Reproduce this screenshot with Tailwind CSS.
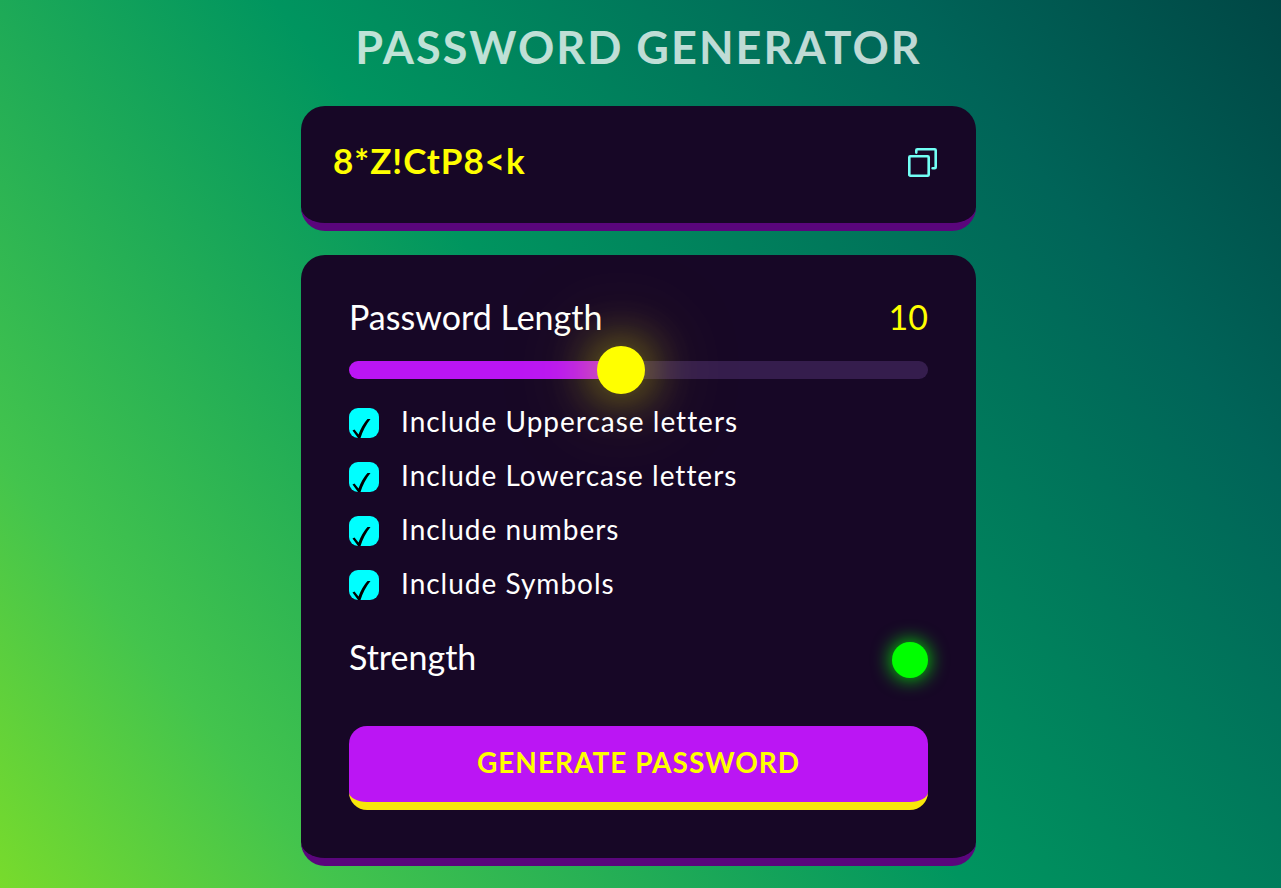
<!DOCTYPE html>
<html lang="en">
<head>
<meta charset="utf-8">
<meta name="viewport" content="width=device-width, initial-scale=1">
<title>Password Generator</title>
<script src="https://cdn.jsdelivr.net/npm/@tailwindcss/browser@4"></script>
</head>
<body class="min-h-screen bg-[linear-gradient(52deg,#78db2c_0%,#43c44d_17%,#00955f_49%,#006458_81%,#004745_100%)] font-['Lato',sans-serif] text-white">
<main class="mx-auto flex w-full max-w-[675px] flex-col gap-6 pt-5 pr-1 box-content">
  <h1 class="mb-2 text-center text-[45px] leading-[54px] font-bold tracking-[2px] whitespace-nowrap uppercase text-white/75">Password Generator</h1>

  <section class="flex items-center justify-between rounded-3xl border-b-8 border-[#5a067c] bg-[#170726] px-8 pt-7 pb-8">
    <output for="length" class="pb-1 text-[35px] leading-[53px] font-bold tracking-[1px] text-[#ffff00]">8*Z!CtP8&lt;k</output>
    <button type="button" aria-label="Copy password" class="p-1 text-[#72fff5]">
      <svg class="h-9 w-9" viewBox="0 0 36 36" fill="none" stroke="currentColor" stroke-width="2.6" stroke-linejoin="round" stroke-linecap="round">
        <rect x="5.3" y="11.3" width="19.4" height="19.4" rx="1"/>
        <path d="M12.3 7.6V5.3a1 1 0 0 1 1-1h17.4a1 1 0 0 1 1 1v17a1 1 0 0 1-1 1H28.6"/>
      </svg>
    </button>
  </section>

  <form class="rounded-3xl border-b-8 border-[#5a067c] bg-[#170726] px-12 pt-9 pb-12">
    <div class="flex items-center justify-between text-[34px] leading-[52px]">
      <label for="length">Password Length</label>
      <output for="length" class="text-[#ffff00]">10</output>
    </div>
    <input id="length" type="range" min="3" max="18" value="10" class="mt-[18px] block h-[18px] w-full appearance-none rounded-full bg-[linear-gradient(90deg,#bb15f4_47%,#351d4d_47%)] [&::-webkit-slider-thumb]:h-12 [&::-webkit-slider-thumb]:w-12 [&::-webkit-slider-thumb]:appearance-none [&::-webkit-slider-thumb]:rounded-full [&::-webkit-slider-thumb]:bg-[#ffff00] [&::-webkit-slider-thumb]:shadow-[0_0_100px_rgba(255,255,0,0.4),0_0_50px_rgba(255,255,0,0.65)]">
    <div class="mt-[29px] flex flex-col gap-6 text-[28px] leading-[26px] tracking-[1px]">
      <div class="flex items-start gap-[22px]">
        <input id="upper" type="checkbox" checked class="h-[30px] w-[30px] appearance-none rounded-[9px] bg-[#00ffff] bg-[url('data:image/svg+xml,%3Csvg%20xmlns=%22http://www.w3.org/2000/svg%22%20viewBox=%220%200%2030%2030%22%3E%3Cpath%20d=%22M3.5%2022.5L5.5%2021.5L9.5%2026.5Q13%2017%2018.5%2011H21.5Q15%2019%2011.5%2030H9Z%22/%3E%3C/svg%3E')]">
        <label for="upper">Include Uppercase letters</label>
      </div>
      <div class="flex items-start gap-[22px]">
        <input id="lower" type="checkbox" checked class="h-[30px] w-[30px] appearance-none rounded-[9px] bg-[#00ffff] bg-[url('data:image/svg+xml,%3Csvg%20xmlns=%22http://www.w3.org/2000/svg%22%20viewBox=%220%200%2030%2030%22%3E%3Cpath%20d=%22M3.5%2022.5L5.5%2021.5L9.5%2026.5Q13%2017%2018.5%2011H21.5Q15%2019%2011.5%2030H9Z%22/%3E%3C/svg%3E')]">
        <label for="lower">Include Lowercase letters</label>
      </div>
      <div class="flex items-start gap-[22px]">
        <input id="numbers" type="checkbox" checked class="h-[30px] w-[30px] appearance-none rounded-[9px] bg-[#00ffff] bg-[url('data:image/svg+xml,%3Csvg%20xmlns=%22http://www.w3.org/2000/svg%22%20viewBox=%220%200%2030%2030%22%3E%3Cpath%20d=%22M3.5%2022.5L5.5%2021.5L9.5%2026.5Q13%2017%2018.5%2011H21.5Q15%2019%2011.5%2030H9Z%22/%3E%3C/svg%3E')]">
        <label for="numbers">Include numbers</label>
      </div>
      <div class="flex items-start gap-[22px]">
        <input id="symbols" type="checkbox" checked class="h-[30px] w-[30px] appearance-none rounded-[9px] bg-[#00ffff] bg-[url('data:image/svg+xml,%3Csvg%20xmlns=%22http://www.w3.org/2000/svg%22%20viewBox=%220%200%2030%2030%22%3E%3Cpath%20d=%22M3.5%2022.5L5.5%2021.5L9.5%2026.5Q13%2017%2018.5%2011H21.5Q15%2019%2011.5%2030H9Z%22/%3E%3C/svg%3E')]">
        <label for="symbols">Include Symbols</label>
      </div>
    </div>
    <div class="mt-8 flex items-end justify-between pb-1 text-[34px] leading-[50px]">
      <span>Strength</span>
      <span role="img" aria-label="Strong" class="mb-1 h-9 w-9 rounded-full bg-[#00ff00] shadow-[0_0_20px_#00ff00]"></span>
    </div>
    <button type="button" class="mt-10 block w-full rounded-[18px] border-b-8 border-[#f8e70a] bg-[#bb15f4] pt-4 pb-5 text-[28px] leading-10 font-bold tracking-[1px] text-[#ffff00] uppercase">Generate Password</button>
  </form>
</main>
</body>
</html>
